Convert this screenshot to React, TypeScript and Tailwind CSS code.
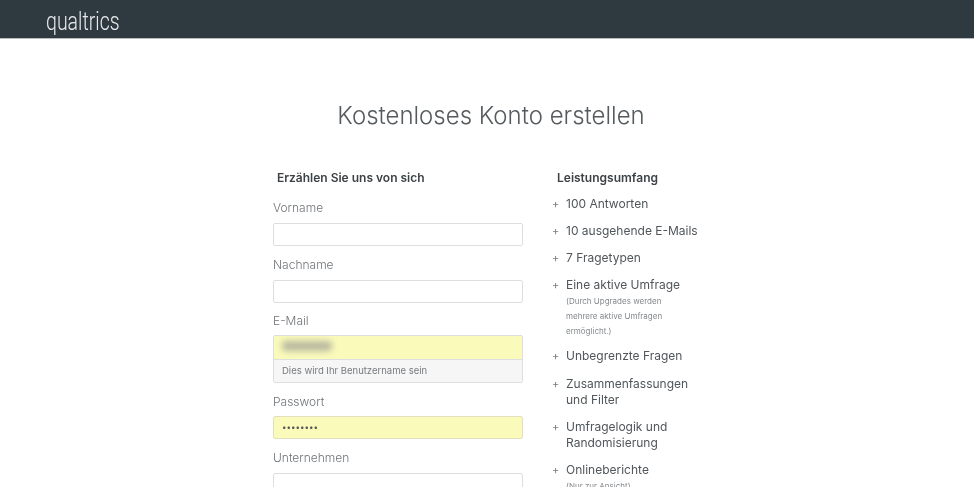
export default function App() {
  const F = "font-['Inter',sans-serif]";
  const fields = (label: string, cls: string, mt: string) => (
    <div className={mt}>
      <div className="text-[12px] leading-[16px] font-light text-[#6f7478] pl-0">{label}</div>
      <div className={cls} />
    </div>
  );
  const input = "mt-[7px] h-[23px] w-[250px] rounded-[2px] border border-[#dcdee0] bg-white";
  const Item = ({ children, sub, mt }: { children: React.ReactNode; sub?: React.ReactNode; mt: string }) => (
    <div className={`flex ${mt}`}>
      <span className="w-[14px] shrink-0 text-[11px] leading-[16px] text-[#777c80]">+</span>
      <div>
        <div className="text-[12px] leading-[16px] font-normal text-[#50565a]">{children}</div>
        {sub && <div className="mt-[1px] text-[8px] leading-[15px] text-[#85898c]">{sub}</div>}
      </div>
    </div>
  );
  return (
    <div className={`h-[487px] w-[974px] overflow-hidden bg-white ${F}`}>
      <header className="flex h-[39px] items-start border-b border-[#b9bdc0] bg-[#2f3a40] pl-[46px]">
        <span className="origin-left scale-x-[0.78] font-['Roboto',sans-serif] text-[25px] leading-[44px] font-light text-[#e8eaeb] blur-[0.4px]">qualtrics</span>
      </header>
      <h1 className="mt-[62px] text-center text-[24px] leading-[30px] font-light text-[#555a5e] blur-[0.3px] pl-[8px]">Kostenloses Konto erstellen</h1>
      <main className="mt-[39px] flex blur-[0.4px]">
        <section className="ml-[273px] w-[250px]">
          <h2 className="pl-[4px] text-[12px] leading-[16px] font-semibold text-[#3c4246]">Erzählen Sie uns von sich</h2>
          {fields("Vorname", input, "mt-[14px]")}
          {fields("Nachname", input, "mt-[11px]")}
          <div className="mt-[10px]">
            <div className="text-[12px] leading-[16px] font-light text-[#6f7478]">E-Mail</div>
            <div className="mt-[6px] w-[250px] overflow-hidden rounded-[2px] border border-[#dcdee0]">
              <div className="h-[23px] bg-[#fafabb] pl-[8px] pt-[5px]">
                <div className="h-[10px] w-[50px] rounded-[4px] bg-[#b9b9a0] blur-[3px]" />
              </div>
              <div className="h-[23px] border-t border-[#dcdee0] bg-[#f6f6f6] pl-[8px] text-[9.5px] leading-[22px] text-[#777c80]">Dies wird Ihr Benutzername sein</div>
            </div>
          </div>
          <div className="mt-[11px]">
            <div className="text-[12px] leading-[16px] font-light text-[#6f7478]">Passwort</div>
            <div className="mt-[6px] h-[23px] w-[250px] rounded-[2px] border border-[#e0e0c0] bg-[#fafabb] pl-[8px] text-[8px] leading-[21px] text-[#555]">••••••••</div>
          </div>
          {fields("Unternehmen", input, "mt-[11px]")}
        </section>
        <section className="ml-[29px] w-[170px]">
          <h2 className="pl-[5px] text-[12px] leading-[16px] font-semibold text-[#3c4246]">Leistungsumfang</h2>
          <Item mt="mt-[10px]">100 Antworten</Item>
          <Item mt="mt-[11px]">10 ausgehende E-Mails</Item>
          <Item mt="mt-[11px]">7 Fragetypen</Item>
          <Item mt="mt-[11px]" sub={<>(Durch Upgrades werden<br />mehrere aktive Umfragen<br />ermöglicht.)</>}>Eine aktive Umfrage</Item>
          <Item mt="mt-[9px]">Unbegrenzte Fragen</Item>
          <Item mt="mt-[12px]">Zusammenfassungen<br />und Filter</Item>
          <Item mt="mt-[11px]">Umfragelogik und<br />Randomisierung</Item>
          <Item mt="mt-[11px]" sub="(Nur zur Ansicht)">Onlineberichte</Item>
        </section>
      </main>
    </div>
  );
}
